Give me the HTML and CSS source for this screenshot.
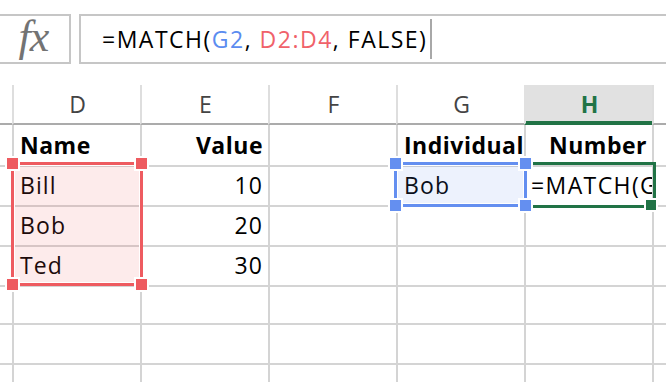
FILE: index.html
```html
<!DOCTYPE html>
<html lang="en">
<head>
    <meta charset="UTF-8">
    <meta name="viewport" content="width=device-width, initial-scale=1.0">
    <title>MATCH</title>
    <link rel="stylesheet" href="styles.css">
</head>
<body>

    <!-- formula bar -->
    <div class="formula-bar">
        <div class="fx-box"><span class="fx">fx</span></div>
        <div class="formula-input">
            <span>=MATCH(</span><span class="ref-blue">G2</span><span>, </span><span class="ref-red">D2:D4</span><span>, FALSE)</span><span class="caret"></span>
        </div>
    </div>

    <!-- sheet -->
    <div class="sheet">
        <div class="row head-row">
            <div class="cell gutter"></div>
            <div class="cell col-head">D</div>
            <div class="cell col-head">E</div>
            <div class="cell col-head">F</div>
            <div class="cell col-head">G</div>
            <div class="cell col-head active">H</div>
            <div class="cell col-head"></div>
        </div>
        <div class="row">
            <div class="cell gutter"></div>
            <div class="cell bold">Name</div>
            <div class="cell bold num">Value</div>
            <div class="cell"></div>
            <div class="cell bold">Individual</div>
            <div class="cell bold num">Number</div>
            <div class="cell"></div>
        </div>
        <div class="row">
            <div class="cell gutter"></div>
            <div class="cell">Bill</div>
            <div class="cell num">10</div>
            <div class="cell"></div>
            <div class="cell">Bob</div>
            <div class="cell editing">=MATCH(G2, D2:D4, FALSE)</div>
            <div class="cell"></div>
        </div>
        <div class="row">
            <div class="cell gutter"></div>
            <div class="cell">Bob</div>
            <div class="cell num">20</div>
            <div class="cell"></div>
            <div class="cell"></div>
            <div class="cell"></div>
            <div class="cell"></div>
        </div>
        <div class="row">
            <div class="cell gutter"></div>
            <div class="cell">Ted</div>
            <div class="cell num">30</div>
            <div class="cell"></div>
            <div class="cell"></div>
            <div class="cell"></div>
            <div class="cell"></div>
        </div>
        <div class="row">
            <div class="cell gutter"></div>
            <div class="cell"></div><div class="cell"></div><div class="cell"></div>
            <div class="cell"></div><div class="cell"></div><div class="cell"></div>
        </div>
        <div class="row">
            <div class="cell gutter"></div>
            <div class="cell"></div><div class="cell"></div><div class="cell"></div>
            <div class="cell"></div><div class="cell"></div><div class="cell"></div>
        </div>
        <div class="row">
            <div class="cell gutter"></div>
            <div class="cell"></div><div class="cell"></div><div class="cell"></div>
            <div class="cell"></div><div class="cell"></div><div class="cell"></div>
        </div>

        <!-- reference highlights -->
        <div class="range range-red">
            <i class="handle tl"></i><i class="handle tr"></i>
            <i class="handle bl"></i><i class="handle br"></i>
        </div>
        <div class="active-cell"><i class="fill-handle"></i></div>
        <div class="range range-blue">
            <i class="handle tl"></i><i class="handle tr"></i>
            <i class="handle bl"></i><i class="handle br"></i>
        </div>
    </div>

</body>
</html>
```

FILE: styles.css
```css
* {
    margin: 0;
    padding: 0;
    box-sizing: border-box;
}

html, body {
    width: 666px;
    height: 382px;
    overflow: hidden;
}

body {
    background: #fff;
    font-family: 'Open Sans', 'Noto Sans', sans-serif;
    color: #000;
}

/* 公式栏 */
.formula-bar {
    display: flex;
    gap: 8px;
    padding-top: 14px;
    margin-left: -2px;
    width: 680px;
    height: 64px;
}

.fx-box {
    width: 73px;
    height: 50px;
    border: 2px solid #c6c6c6;
    display: flex;
    align-items: center;
    justify-content: center;
}

.fx {
    font-family: 'Liberation Serif', serif;
    font-style: italic;
    font-size: 44px;
    color: #737373;
    line-height: 1;
    margin-top: -5px;
    margin-left: -2px;
    letter-spacing: -1px;
}

.formula-input {
    flex: 1;
    height: 50px;
    border: 2px solid #c6c6c6;
    padding-left: 21px;
    display: flex;
    align-items: center;
    font-size: 23px;
    letter-spacing: 1.5px;
    white-space: pre;
}

.ref-blue { color: #5b8cf0; }
.ref-red { color: #f0626a; }

.caret {
    display: inline-block;
    width: 2px;
    height: 40px;
    margin-left: 3px;
    background: #a8a8a8;
}

/* 表格 */
.sheet {
    position: relative;
    margin-top: 21px;
    width: 680px;
}

.row {
    display: grid;
    grid-template-columns: 12px repeat(5, 128px) 28px;
    height: 40px;
}

.cell {
    border-left: 2px solid #d4d4d4;
    border-bottom: 2px solid #d4d4d4;
    font-size: 23px;
    letter-spacing: 1.1px;
    line-height: 40px;
    padding: 0 5px 0 6px;
    white-space: nowrap;
}

.cell.gutter {
    border-left: none;
    padding: 0;
}

.bold {
    font-weight: 700;
    letter-spacing: 0.5px;
}

.num { text-align: right; }

.cell.editing {
    padding-left: 5px;
    padding-right: 0;
    letter-spacing: 1.4px;
    overflow: hidden;
}

.head-row .cell {
    border-left-color: #dedede;
    border-bottom-color: #ababab;
    text-align: center;
    color: #444;
    line-height: 38px;
    letter-spacing: 0;
}

.head-row .col-head.active {
    background: #e1e1e1;
    border-left-color: #e1e1e1;
    border-bottom-color: #217346;
    box-shadow: inset 0 -2px 0 #217346;
    color: #217346;
    font-weight: 700;
}

/* 引用框 */
.range {
    position: absolute;
    border: 3px solid;
    pointer-events: none;
}

.range-red {
    left: 11px;
    top: 77px;
    width: 132px;
    height: 124px;
    border-color: #ee5b60;
    background: rgba(236, 90, 94, 0.12);
    box-shadow: inset 0 0 0 1px #fff;
}

.range-blue {
    left: 394px;
    top: 77px;
    width: 133px;
    height: 45px;
    border-color: #648ff0;
    background: rgba(91, 140, 239, 0.11);
    box-shadow: inset 0 0 0 1px #fff;
}

.handle {
    position: absolute;
    width: 11px;
    height: 11px;
    box-shadow: 0 0 0 2px #fff;
    z-index: 3;
}

.range-red .handle { background: #ee5b60; }
.range-blue .handle { background: #648ff0; }

.handle.tl { left: -7px; top: -7px; }
.handle.tr { right: -7px; top: -7px; }
.handle.bl { left: -7px; bottom: -7px; }
.handle.br { right: -7px; bottom: -7px; }

.active-cell {
    position: absolute;
    left: 523px;
    top: 77px;
    width: 133px;
    height: 46px;
    border: 3px solid #217346;
    pointer-events: none;
}

.fill-handle {
    position: absolute;
    right: -3px;
    bottom: -5px;
    width: 10px;
    height: 10px;
    background: #217346;
    box-shadow: 0 0 0 2px #fff;
}
```
